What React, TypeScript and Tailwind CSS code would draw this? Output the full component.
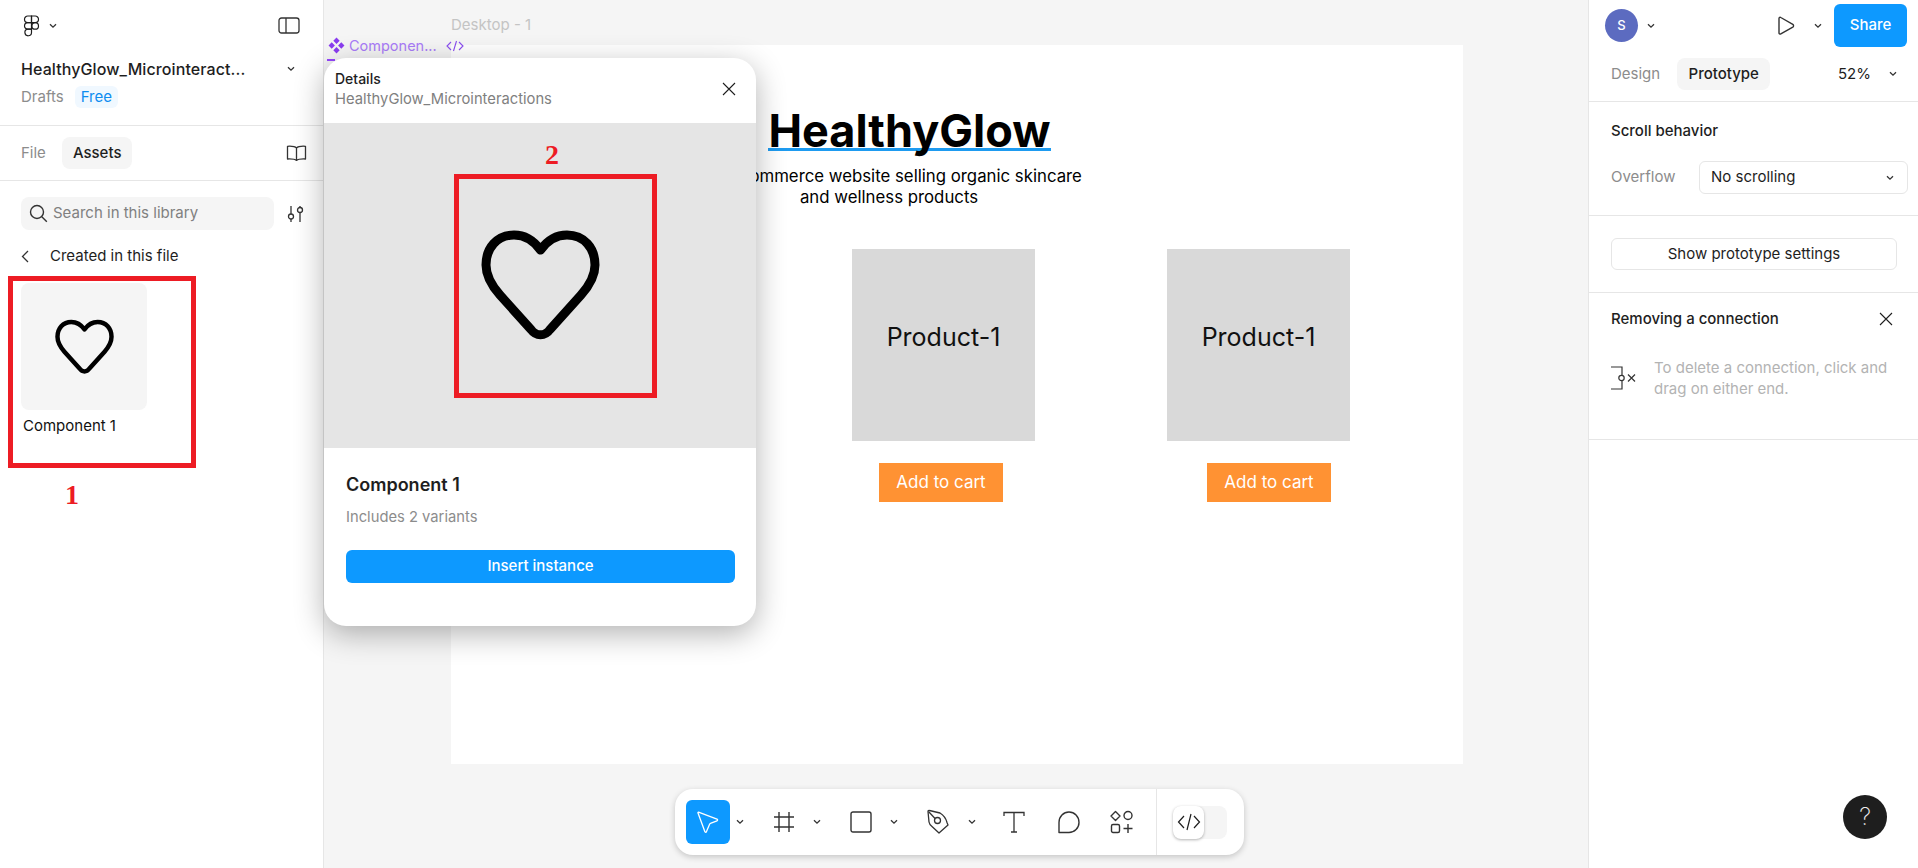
import React from 'react';

const Chevron: React.FC<{ className?: string }> = ({ className = '' }) => (
  <svg width="8" height="6" viewBox="0 0 8 6" fill="none" className={`shrink-0 ${className}`}>
    <path d="M1 1.2 4 4.2 7 1.2" stroke="#333" strokeWidth="1.3" />
  </svg>
);

const Cross: React.FC<{ size?: number }> = ({ size = 14 }) => (
  <svg width={size} height={size} viewBox="0 0 14 14" fill="none">
    <path d="M1 1 13 13M13 1 1 13" stroke="#1e1e1e" strokeWidth="1.1" />
  </svg>
);

const Heart: React.FC<{ className?: string }> = ({ className = '' }) => (
  <svg viewBox="0 0 119 111" fill="none" className={className}>
    <path
      d="M59.5 20C53 11 44 5 33 5 16 5 5 18 5 35 5 47 11 56 19 65L50 99.500C55 106.500 64 106.500 69 99.500L100 65C108 56 114 47 114 35 114 18 103 5 86 5 75 5 66 11 59.5 20Z"
      stroke="#000"
      strokeWidth="9"
      strokeLinejoin="round"
    />
  </svg>
);

const FigmaLogo = () => (
  <svg width="17" height="22" viewBox="0 0 17 22" fill="none" stroke="#1e1e1e" strokeWidth="1.2">
    <path d="M8.5 1H4.8a3.3 3.3 0 0 0 0 6.6h3.7V1Z" />
    <path d="M8.5 1h3.7a3.3 3.3 0 0 1 0 6.6H8.5V1Z" />
    <path d="M8.5 7.6H4.8a3.3 3.3 0 0 0 0 6.6h3.7V7.6Z" />
    <circle cx="12.2" cy="10.9" r="3.3" />
    <path d="M8.5 14.2H4.8a3.3 3.3 0 1 0 3.7 3.3v-3.3Z" />
  </svg>
);

const ToolbarIcons = {
  Move: () => (
    <svg width="24" height="26" viewBox="0 0 24 26" fill="none">
      <path
        d="M2.5 3.2 21 10.2c.8.3.8 1.3 0 1.6l-6.6 2.6c-.4.1-.6.4-.8.8l-3.2 7.6c-.3.8-1.3.7-1.5-.1L2 4c-.2-.6.1-.9.5-.8Z"
        stroke="#fff"
        strokeWidth="1.3"
      />
    </svg>
  ),
  Frame: () => (
    <svg width="24" height="24" viewBox="0 0 24 24" fill="none" stroke="#333" strokeWidth="1.4">
      <path d="M7 2v20M17 2v20M2 7h20M2 17h20" />
    </svg>
  ),
  Rect: () => (
    <svg width="22" height="22" viewBox="0 0 22 22" fill="none">
      <rect x="1" y="1" width="20" height="20" rx="2" stroke="#333" strokeWidth="1.4" />
    </svg>
  ),
  Pen: () => (
    <svg width="24" height="26" viewBox="0 0 24 26" fill="none" stroke="#333" strokeWidth="1.3">
      <path d="M2 2.5 3 13c.3 2 1.3 3.2 3 4.5l7 6.5 9-8-1-2.5c-1-4-3-7-7-9.500L3.500 1.500c-.8-.3-1.500.2-1.500 1Z" strokeLinejoin="round" />
      <path d="M2.500 2.500 9 9.500" />
      <circle cx="11.500" cy="11.500" r="3" />
    </svg>
  ),
  Text: () => (
    <svg width="22" height="22" viewBox="0 0 22 22" fill="none" stroke="#333" strokeWidth="1.3">
      <path d="M1 5V1.500h20V5M11 1.500v19.500M8 21h6" />
    </svg>
  ),
  Comment: () => (
    <svg width="22" height="23" viewBox="0 0 22 23" fill="none">
      <path
        d="M1 21.500V11.500C1 5.700 5.500 1 11 1s10 4.700 10 10.500c0 5.500-4.500 10-10 10H1Z"
        stroke="#333"
        strokeWidth="1.4"
        strokeLinejoin="round"
      />
    </svg>
  ),
  Actions: () => (
    <svg width="24" height="24" viewBox="0 0 24 24" fill="none" stroke="#333" strokeWidth="1.4">
      <path d="M5.500 1.500 10 6l-4.500 4.500L1 6Z" strokeLinejoin="round" />
      <circle cx="18" cy="5.500" r="4" />
      <rect x="1.500" y="14.500" width="8" height="8" rx="1.500" />
      <path d="M18 14v9M13.500 18.500h9" />
    </svg>
  ),
};

const Product = () => (
  <div className="w-[183px] h-[192px] pb-[15px] bg-[#d9d9d9] flex items-center justify-center text-[25px] text-[#111]">
    Product-1
  </div>
);

const AddToCart = () => (
  <div className="w-[124px] h-[39px] bg-[#ff9233] text-white text-[17px] flex items-center justify-center">
    Add to cart
  </div>
);

const LeftPanel = () => (
  <aside className="relative w-[324px] shrink-0 h-full bg-white border-r border-[#e6e6e6] flex flex-col text-[15px]">
    <div className="h-[126px] shrink-0 border-b border-[#e6e6e6] px-[21px]">
      <div className="flex items-center h-[50px] pt-[1px] justify-between">
        <div className="flex items-center gap-[9px] pl-[2px]">
          <FigmaLogo />
          <Chevron />
        </div>
        <svg width="22" height="17" viewBox="0 0 22 17" fill="none" stroke="#333" strokeWidth="1.3" className="mr-[2px]">
          <rect x="1" y="1" width="20" height="15" rx="2.500" />
          <path d="M8 1v15" />
        </svg>
      </div>
      <div className="flex items-center justify-between mt-[7px]">
        <span className="text-[16px] font-medium text-[#1e1e1e] tracking-[0.1px]">HealthyGlow_Microinteract...</span>
        <Chevron className="mr-[7px]" />
      </div>
      <div className="flex items-center gap-[11px] mt-[5px]">
        <span className="text-[#8c8c8c]">Drafts</span>
        <span className="bg-[#f0f8ff] text-[#0d8cf0] rounded-[6px] px-[6px] h-[22px] flex items-center">Free</span>
      </div>
    </div>
    <div className="h-[55px] shrink-0 border-b border-[#e6e6e6] pl-[21px] pr-[16px] flex items-center justify-between">
      <div className="flex items-center gap-[16px]">
        <span className="text-[#8c8c8c]">File</span>
        <span className="bg-[#f5f5f5] text-[#1e1e1e] font-medium rounded-[8px] h-[32px] px-[11px] flex items-center">Assets</span>
      </div>
      <svg width="21" height="16" viewBox="0 0 21 16" fill="none" stroke="#333" strokeWidth="1.3">
        <path d="M10.500 3C9 1.500 6 1 1.500 1.300V14c4.500-.2 7.500.2 9 1.500 1.500-1.300 4.500-1.700 9-1.500V1.300C15 1 12 1.500 10.500 3Zm0 0v12.500" strokeLinejoin="round" />
      </svg>
    </div>
    <div className="pl-[21px] pr-[19px] pt-[16px]">
      <div className="flex items-center justify-between">
        <div className="w-[253px] h-[33px] bg-[#f5f5f5] rounded-[8px] flex items-center pl-[8px] gap-[5px] text-[#808080]">
          <svg width="19" height="19" viewBox="0 0 19 19" fill="none" stroke="#333" strokeWidth="1.4">
            <circle cx="8" cy="8" r="6.500" />
            <path d="m12.800 12.800 5 5" />
          </svg>
          Search in this library
        </div>
        <svg width="17" height="17" viewBox="0 0 17 17" fill="none" stroke="#333" strokeWidth="1.3">
          <path d="M4 1v8M4 14v3M13 1v1.500M13 8v9" />
          <circle cx="4" cy="11.500" r="2.500" />
          <circle cx="13" cy="5" r="2.500" />
        </svg>
      </div>
      <div className="flex items-center mt-[15px] h-[22px] gap-[21px] text-[#1e1e1e]">
        <svg width="8" height="13" viewBox="0 0 8 13" fill="none" stroke="#333" strokeWidth="1.3">
          <path d="M7 1 1.500 6.500 7 12" />
        </svg>
        Created in this file
      </div>
      <div className="w-[126px] h-[127px] mt-[16px] bg-[#f5f5f5] rounded-[8px] flex items-center justify-center">
        <Heart className="w-[59px] h-[56px]" />
      </div>
      <div className="text-[#111] mt-[5px] pl-[2px]">Component 1</div>
    </div>

    {/* annotation over the asset card */}
    <div className="absolute left-[8px] top-[276px] w-[188px] h-[192px] border-[5px] border-[#ed1c24]" />
    <div className="absolute left-[65px] top-[480px] text-[28px] leading-[30px] font-bold text-[#ed1c24] [font-family:'Liberation_Serif',serif]">
      1
    </div>
  </aside>
);

const DetailsModal = () => (
  <div className="absolute left-[324px] top-[58px] w-[432px] h-[568px] bg-white rounded-[22px] overflow-hidden shadow-[0_8px_30px_rgba(0,0,0,0.3)] z-10 flex flex-col">
    <div className="h-[65px] shrink-0 pl-[11px] pr-[20px] pb-[4px] flex items-center justify-between">
      <div>
        <div className="text-[14px] leading-[21px] font-medium text-[#1e1e1e]">Details</div>
        <div className="text-[14.750px] leading-[21px] text-[#808080]">HealthyGlow_Microinteractions</div>
      </div>
      <Cross />
    </div>
    <div className="relative h-[325px] shrink-0 bg-[#e5e5e5] flex items-center justify-center">
      <Heart className="w-[119px] h-[111px]" />
      <div className="absolute left-[130px] top-[51px] w-[203px] h-[224px] border-[5px] border-[#ed1c24]" />
      <div className="absolute left-[221px] top-[17px] text-[28px] leading-[30px] font-bold text-[#ed1c24] [font-family:'Liberation_Serif',serif]">
        2
      </div>
    </div>
    <div className="pl-[22px] pr-[21px] pt-[25px]">
      <div className="text-[18px] leading-[24px] font-semibold text-[#1e1e1e]">Component 1</div>
      <div className="text-[14.750px] leading-[20px] text-[#8c8c8c] mt-[10px]">Includes 2 variants</div>
      <div className="mt-[23px] h-[33px] bg-[#0d99ff] rounded-[6px] text-white text-[15px] font-medium flex items-center justify-center">
        Insert instance
      </div>
    </div>
  </div>
);

const Toolbar = () => (
  <div className="absolute left-[351px] top-[789px] w-[569px] h-[66px] bg-white rounded-[18px] shadow-[0_2px_6px_rgba(0,0,0,0.2)] flex items-center pl-[11px]">
    <div className="w-[44px] h-[44px] bg-[#0d99ff] rounded-[6px] flex items-center justify-center">
      <ToolbarIcons.Move />
    </div>
    <Chevron className="ml-[6px]" />
    <div className="ml-[28px]"><ToolbarIcons.Frame /></div>
    <Chevron className="ml-[17px]" />
    <div className="ml-[29px]"><ToolbarIcons.Rect /></div>
    <Chevron className="ml-[18px]" />
    <div className="ml-[28px]"><ToolbarIcons.Pen /></div>
    <Chevron className="ml-[18px]" />
    <div className="ml-[27px]"><ToolbarIcons.Text /></div>
    <div className="ml-[33px]"><ToolbarIcons.Comment /></div>
    <div className="ml-[30px]"><ToolbarIcons.Actions /></div>
    <div className="ml-[22px] w-[1px] h-full bg-[#e6e6e6]" />
    <div className="ml-[16px] w-[54px] h-[33px] bg-[#f5f5f5] rounded-[8px]">
      <div className="w-[31px] h-[33px] bg-white rounded-[8px] shadow-[0_1px_3px_rgba(0,0,0,0.3)] flex items-center justify-center">
        <svg width="24" height="18" viewBox="0 0 24 18" fill="none" stroke="#1e1e1e" strokeWidth="1.2">
          <path d="M7 3 1.500 9 7 15M17 3l5.500 6-5.500 6M14 1l-4 16" />
        </svg>
      </div>
    </div>
  </div>
);

const Canvas = () => (
  <main className="relative flex-1 h-full bg-[#f5f5f5] overflow-hidden pl-[127px] pt-[45px]">
    <div className="absolute left-[127px] top-[14px] text-[15px] text-[#c4c4c4]">Desktop - 1</div>
    <div className="absolute left-[4px] top-[35px] flex items-center text-[14.500px] text-[#a97cf8]">
      <svg width="17" height="17" viewBox="0 0 16 16" fill="#8a3df0" className="mr-[4px]">
        <path d="m8 .5 3 3-3 3-3-3ZM8 9.500l3 3-3 3-3-3ZM3.500 5l3 3-3 3-3-3ZM12.500 5l3 3-3 3-3-3Z" />
      </svg>
      Componen...
      <svg width="18" height="12" viewBox="0 0 18 12" fill="none" stroke="#8a4df0" strokeWidth="1.100" className="ml-[9px]">
        <path d="M5 2 1 6l4 4M13 2l4 4-4 4M10.500 1l-3 10" />
      </svg>
    </div>
    <div className="absolute left-[3px] top-[59px] w-[8px] h-[2px] bg-[#9747ff]" />
    <div className="w-[1012px] h-[719px] bg-white pt-[62px]">
      <div className="ml-[317px] w-[283px] pt-[1px] text-center text-[45px] leading-[46px] font-bold text-black border-b-[3px] border-[#1e9bf0] h-[44px] whitespace-nowrap">
        HealthyGlow
      </div>
      <div className="w-[500px] ml-[188px] mt-[15px] text-center text-[16.800px] leading-[21px] text-black">
        An e-commerce website selling organic skincare
        <br />
        and wellness products
      </div>
      <div className="flex gap-[132px] ml-[401px] mt-[41px]">
        <Product />
        <Product />
      </div>
      <div className="flex gap-[204px] ml-[428px] mt-[22px]">
        <AddToCart />
        <AddToCart />
      </div>
    </div>
    <Toolbar />
  </main>
);

const RightPanel = () => (
  <aside className="w-[330px] shrink-0 h-full bg-white border-l border-[#e6e6e6] flex flex-col text-[15px]">
    <div className="h-[102px] shrink-0 border-b border-[#e6e6e6]">
      <div className="h-[51px] flex items-center pl-[16px] pr-[10px]">
        <div className="w-[33px] h-[33px] rounded-full bg-[#5c6bc0] text-white text-[13px] font-medium flex items-center justify-center">S</div>
        <Chevron className="ml-[9px]" />
        <svg width="18" height="20" viewBox="0 0 18 20" fill="none" stroke="#333" strokeWidth="1.4" className="ml-[122px]">
          <path d="M2 2.500c0-1 1-1.500 1.800-1l12 6.800c1 .6 1 2.200 0 2.800l-12 6.800c-.8.5-1.800 0-1.800-1Z" strokeLinejoin="round" />
        </svg>
        <Chevron className="ml-[19px]" />
        <div className="ml-[12px] w-[73px] h-[43px] bg-[#0d99ff] rounded-[6px] text-white font-medium flex items-center justify-center">Share</div>
      </div>
      <div className="h-[32px] mt-[7px] flex items-center pl-[22px] pr-[21px]">
        <span className="text-[#8c8c8c]">Design</span>
        <span className="ml-[17px] w-[93px] h-[32px] bg-[#f5f5f5] rounded-[8px] font-medium text-[#1e1e1e] flex items-center justify-center">Prototype</span>
        <span className="ml-auto text-[#1e1e1e]">52%</span>
        <Chevron className="ml-[18px]" />
      </div>
    </div>
    <div className="h-[114px] shrink-0 border-b border-[#e6e6e6] pl-[22px] pr-[10px] pt-[19px]">
      <div className="font-medium text-[#1e1e1e] leading-[20px]">Scroll behavior</div>
      <div className="flex items-center justify-between mt-[20px]">
        <span className="text-[#8c8c8c]">Overflow</span>
        <div className="w-[209px] h-[33px] border border-[#e6e6e6] rounded-[6px] flex items-center justify-between pl-[11px] pr-[13px] text-[#1e1e1e]">
          No scrolling
          <Chevron />
        </div>
      </div>
    </div>
    <div className="h-[77px] shrink-0 border-b border-[#e6e6e6] pl-[22px] pr-[21px] pt-[22px]">
      <div className="h-[32px] border border-[#e6e6e6] rounded-[6px] flex items-center justify-center text-[#1e1e1e]">
        Show prototype settings
      </div>
    </div>
    <div className="h-[147px] shrink-0 border-b border-[#e6e6e6] pl-[22px] pr-[25px] pt-[16px]">
      <div className="flex items-center justify-between">
        <span className="font-medium text-[#1e1e1e] leading-[20px]">Removing a connection</span>
        <Cross />
      </div>
      <div className="flex mt-[28px]">
        <svg width="25" height="24" viewBox="0 0 25 24" fill="none" stroke="#333" strokeWidth="1.200" className="mt-[9px] shrink-0">
          <path d="M0 1h11v8.500M11 14.500V23H0" />
          <circle cx="10.500" cy="12" r="2.700" />
          <path d="m17 8.500 7 7M24 8.500l-7 7" />
        </svg>
        <div className="ml-[18px] leading-[21px] text-[#b3b3b3]">
          To delete a connection, click and
          <br />
          drag on either end.
        </div>
      </div>
    </div>
    <div className="flex-1 relative">
      <div className="absolute right-[31px] bottom-[29px] w-[44px] h-[44px] rounded-full bg-[#1e1e1e] text-[#eee] text-[24px] font-extralight flex items-center justify-center">?</div>
    </div>
  </aside>
);

export default function App() {
  return (
    <div className="relative w-full h-screen overflow-hidden flex [font-family:Inter,sans-serif]">
      <LeftPanel />
      <Canvas />
      <RightPanel />
      <DetailsModal />
    </div>
  );
}
